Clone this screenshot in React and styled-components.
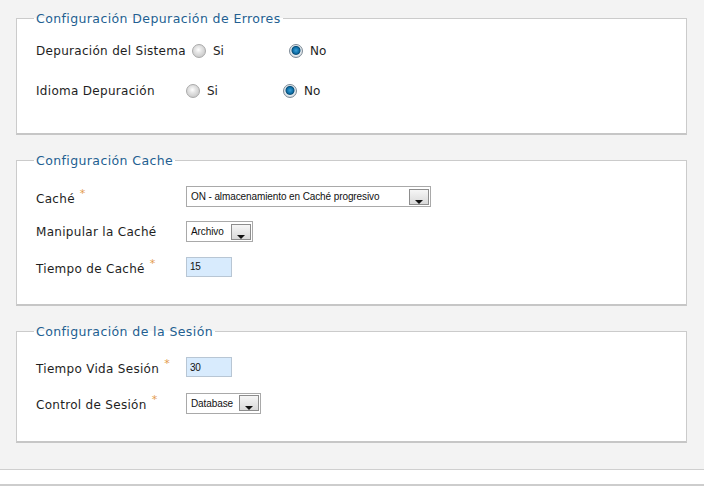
import React from "react";
import styled, { createGlobalStyle } from "styled-components";

const Global = createGlobalStyle`
  html, body { margin: 0; padding: 0; background: #ffffff; }
  body { font-family: "DejaVu Sans", Verdana, sans-serif; }
`;

const Page = styled.div`
  width: 704px;
`;

const Panel = styled.div`
  background: #f3f3f3;
  padding: 11px 17px 26px 16px;
  border-bottom: 1px solid #cfcfcf;
  display: flex;
  flex-direction: column;
  gap: 18px;
`;

const Footer = styled.div`
  height: 14px;
  border-bottom: 2px solid #cdcdcd;
`;

const Fieldset = styled.fieldset`
  margin: 0;
  padding: ${(p) => p.$pad};
  background: #ffffff;
  border: 1px solid #cbcbcb;
  border-bottom: 2px solid #c6c6c6;
  min-width: 0;
`;

const Legend = styled.legend`
  margin-left: 17px;
  padding: 0 2px;
  font-size: 12.5px;
  line-height: 14px;
  letter-spacing: 0.4px;
  color: #235f91;
  position: relative;
  top: 1px;
`;

const Row = styled.div`
  display: flex;
  align-items: center;
  height: ${(p) => p.$h}px;
  padding-left: 19px;
`;

const Label = styled.span`
  min-width: 150px;
  font-size: 12px;
  letter-spacing: 0.3px;
  color: #1e1e1e;
  white-space: nowrap;
  margin-right: ${(p) => p.$mr || 0}px;
`;

const Star = styled.sup`
  color: #e39a4b;
  font-size: 11px;
  margin-left: 5px;
  position: relative;
  top: -1px;
`;

const RadioOption = styled.label`
  display: flex;
  align-items: center;
  width: 97px;
  font-size: 12px;
  color: #1e1e1e;
  gap: 7px;
`;

const RadioDot = styled.span`
  width: 14px;
  height: 14px;
  border-radius: 50%;
  box-sizing: border-box;
  border: 1px solid ${(p) => (p.$on ? "#7c8a96" : "#a9a9a9")};
  background: ${(p) =>
    p.$on
      ? "radial-gradient(circle at 50% 45%, #3aa0d8 0, #0d6fa8 3px, #0a4e78 4px, #e9eef2 5px, #c9d0d6 7px)"
      : "radial-gradient(circle at 45% 40%, #ffffff 0, #e6e6e6 3px, #cdcdcd 7px)"};
  flex: none;
`;

const SelectBox = styled.div`
  display: flex;
  align-items: center;
  justify-content: space-between;
  width: ${(p) => p.$w}px;
  height: 21px;
  box-sizing: border-box;
  border: 1px solid #a9a9a9;
  background: #fff;
  padding: 0 1px 0 4px;
  font-family: "Liberation Sans", Arial, sans-serif;
  font-size: 10px;
  letter-spacing: -0.1px;
  color: #111;
`;

const DropButton = styled.span`
  position: relative;
  width: 20px;
  height: 16px;
  box-sizing: border-box;
  border: 1px solid #8d8d8d;
  background: linear-gradient(#f6f6f6, #d9d9d9);
  flex: none;
  &::after {
    content: "";
    position: absolute;
    left: 5px;
    bottom: 0px;
    border-left: 4px solid transparent;
    border-right: 4px solid transparent;
    border-top: 4px solid #111;
  }
`;

const TextInput = styled.div`
  width: 46px;
  height: 20px;
  box-sizing: border-box;
  border: 1px solid #b8c6d4;
  background: #d8ebfd;
  display: flex;
  align-items: center;
  padding-left: 3px;
  font-family: "Liberation Sans", Arial, sans-serif;
  font-size: 10px;
  letter-spacing: -0.2px;
  color: #111;
`;

const Radio = ({ on, children }) => (
  <RadioOption>
    <RadioDot $on={on} />
    {children}
  </RadioOption>
);

const Select = ({ w, children }) => (
  <SelectBox $w={w}>
    <span>{children}</span>
    <DropButton />
  </SelectBox>
);

export default function App() {
  return (
    <Page>
      <Global />
      <Panel>
        <Fieldset $pad="6px 0 22px 0">
          <Legend>Configuración Depuración de Errores</Legend>
          <Row $h={40}>
            <Label $mr={6}>Depuración del Sistema</Label>
            <Radio>Si</Radio>
            <Radio on>No</Radio>
          </Row>
          <Row $h={40}>
            <Label>Idioma Depuración</Label>
            <Radio>Si</Radio>
            <Radio on>No</Radio>
          </Row>
        </Fieldset>

        <Fieldset $pad="12px 0 20px 0">
          <Legend>Configuración Cache</Legend>
          <Row $h={35}>
            <Label>
              Caché<Star>*</Star>
            </Label>
            <Select w={245}>ON - almacenamiento en Caché progresivo</Select>
          </Row>
          <Row $h={35}>
            <Label>Manipular la Caché</Label>
            <Select w={67}>Archivo</Select>
          </Row>
          <Row $h={35}>
            <Label>
              Tiempo de Caché<Star>*</Star>
            </Label>
            <TextInput>15</TextInput>
          </Row>
        </Fieldset>

        <Fieldset $pad="11px 0 20px 0">
          <Legend>Configuración de la Sesión</Legend>
          <Row $h={36}>
            <Label>
              Tiempo Vida Sesión<Star>*</Star>
            </Label>
            <TextInput>30</TextInput>
          </Row>
          <Row $h={36}>
            <Label>
              Control de Sesión<Star>*</Star>
            </Label>
            <Select w={75}>Database</Select>
          </Row>
        </Fieldset>
      </Panel>
      <Footer />
    </Page>
  );
}
